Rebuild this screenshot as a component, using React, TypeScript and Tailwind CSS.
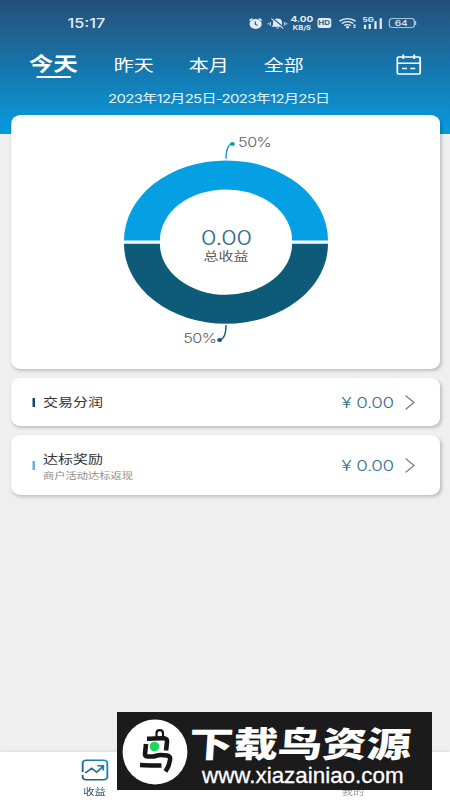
import type { ReactNode } from "react";
import clsx from "clsx";

const RANGES = [
  { label: "今天", width: "w-[68px]" },
  { label: "昨天", width: "w-[60px]" },
  { label: "本月", width: "w-[60px]" },
  { label: "全部", width: "w-[60px]" },
];

const ROWS = [
  { title: "交易分润", note: "", amount: "0.00", bar: "bg-[#0b4a6c]", height: "h-[48px]" },
  { title: "达标奖励", note: "商户活动达标返现", amount: "0.00", bar: "bg-[#66b4cf]", height: "h-[60px]" },
];

function StatusBar() {
  return (
    <div className="flex h-[46px] items-center pl-[54px] pr-[27px] text-[#e3edf5]">
      <span className="flex-1 pt-px text-[13px] font-medium">15:17</span>
      <svg className="mr-[4px] h-[13px] w-[11px]" viewBox="0 0 11 13">
        <circle cx="5.5" cy="7" r="4.9" fill="currentColor" />
        <path d="M.6 3.4 2.8 1.6M10.4 3.4 8.2 1.6" stroke="currentColor" strokeWidth="1.3" />
        <path d="M5.3 4.6v2.8l1.9 1" fill="none" stroke="#265f8f" strokeWidth="1" />
      </svg>
      <svg className="mr-[3px] h-[13px] w-[16px]" viewBox="0 0 16 13">
        <path d="M8 1.5c2.4 0 3.6 1.7 3.6 3.8v2.6l1.2 1.8H3.2l1.2-1.8V5.3C4.4 3.2 5.6 1.5 8 1.5Z" fill="currentColor" />
        <path d="M6.7 10.6h2.6c-.3 1.2-2.3 1.2-2.6 0Z" fill="currentColor" />
        <path d="m3.8 1 9.6 10" stroke="#265a88" strokeWidth="1.2" />
        <path d="m3 1.5 9.6 10" stroke="currentColor" strokeWidth="1" />
        <path d="M2.2 5v3.6M.5 6v1.4M13.8 5v3.6M15.5 6v1.4" stroke="currentColor" strokeWidth=".9" />
      </svg>
      <span className="mr-[4px] flex w-[17px] flex-col items-center font-bold">
        <span className="text-[8px] leading-[8.5px]">4.00</span>
        <span className="text-[6px] leading-[7px]">KB/S</span>
      </span>
      <span className="mr-[6px] flex h-[9.6px] w-[10.5px] items-center justify-center rounded-[2px] bg-[#e3edf5] text-[6.4px] leading-[9px] font-bold text-[#265f8f]">
        HD
      </span>
      <svg className="mr-[5px] h-[12px] w-[14px]" viewBox="0 0 14 12">
        <g fill="none" stroke="currentColor" strokeWidth="1.3">
          <path d="M.5 4.3c3.6-3.6 9.4-3.6 13 0" />
          <path d="M2.5 6.5c2.5-2.4 6.5-2.4 9 0" />
          <path d="M4.4 8.6c1.4-1.4 3.8-1.4 5.2 0" />
        </g>
        <circle cx="7" cy="10.3" r="1.2" fill="currentColor" />
        <path d="M12.6 7.6v3.4" stroke="currentColor" strokeWidth="1.7" strokeDasharray="1.4 .6" />
      </svg>
      <svg className="mr-[5px] h-[13px] w-[16px]" viewBox="0 0 16 13">
        <text x="0" y="5.4" fontSize="6.6" fontWeight="700" fill="currentColor">
          5G
        </text>
        <path d="M2 7.7V12M5.8 7v5M10.4 4.2V12M14.6 1.2V12" stroke="currentColor" strokeWidth="1.8" />
      </svg>
      <span className="flex h-[10.5px] w-[21px] items-center justify-center rounded-[3px] border border-[#a9c3d8] text-[8.2px] font-medium">
        64
      </span>
      <span className="h-[4px] w-[1.5px] bg-[#a9c3d8]" />
    </div>
  );
}

function Header() {
  return (
    <header className="h-[134px] bg-linear-to-b from-[#244f7a] via-[#1574a9] via-48% to-[#029cdf] text-white">
      <StatusBar />
      <nav className="flex h-[38px] pl-[23px]">
        {RANGES.map((range, i) => (
          <div key={range.label} className={clsx("flex flex-col", range.width)}>
            <span
              className={clsx(
                i === 0
                  ? "h-[30px] text-[19.7px] leading-[36px] font-bold"
                  : "mt-[2.5px] text-[16px] leading-[32px] font-normal"
              )}
            >
              {range.label}
            </span>
            {i === 0 && <span className="ml-[5.5px] h-[2px] w-[28px] rounded-full bg-white" />}
          </div>
        ))}
        <svg className="ml-[46px] mt-[8px] h-[21px] w-[20px]" viewBox="0 0 20 21" fill="none" stroke="white" strokeWidth="1.5">
          <rect x=".8" y="3" width="18.4" height="17" rx="1.2" />
          <path d="M1 9.3h18M5.6.5v4.6M14.4.5v4.6M4.6 14.6h4M11.2 14.6h4" />
        </svg>
      </nav>
      <p className="pl-[86.4px] text-[12px] leading-[29px] tracking-[-0.56px] whitespace-nowrap text-[#e2f3fb]">
        2023年12月25日-2023年12月25日
      </p>
    </header>
  );
}

function Card({ className, children }: { className?: string; children: ReactNode }) {
  return (
    <section className={clsx("rounded-[8px] bg-white shadow-[1px_2px_3px_rgba(0,0,0,0.2)]", className)}>
      {children}
    </section>
  );
}

function Donut() {
  return (
    <svg className="h-full w-full" viewBox="0 0 343.2 254">
      <path d="M90.2 125.4a81.6 80 0 0 1 163.2 0h-28.7a52.9 51 0 0 0 -105.8 0Z" fill="#05a0e3" />
      <path d="M90.2 128.8a81.6 80 0 0 0 163.2 0h-28.7a52.9 51 0 0 1 -105.8 0Z" fill="#0d5a79" />
      <path d="M171.8 43.8c0-7 1-14 5-15" fill="none" stroke="#1594cf" strokeWidth="1.1" />
      <circle cx="176.9" cy="29" r="2" fill="#1594cf" />
      <path d="M171.8 210c0 7-1 14-5 15" fill="none" stroke="#0d5a79" strokeWidth="1.1" />
      <circle cx="166.7" cy="225" r="2" fill="#0d5a79" />
      <g fill="#5c5c5c" fontSize="13" fontWeight="300" letterSpacing="-.5">
        <text x="181.5" y="32">50%</text>
        <text x="137.6" y="228">50%</text>
      </g>
      <text x="171.8" y="129.8" fontSize="20.6" fontWeight="300" letterSpacing="-.6" textAnchor="middle" fill="#33708f">
        0.00
      </text>
      <text x="171.9" y="146" fontSize="12" textAnchor="middle" fill="#5c5c5c">
        总收益
      </text>
    </svg>
  );
}

function TabBar() {
  return (
    <footer className="flex h-[48px] bg-white pt-[7px] text-[9px] shadow-[0_-1px_3px_rgba(0,0,0,0.08)]">
      <div className="ml-[55.6px] flex w-[40px] flex-col items-center text-[#34536b]">
        <svg className="h-[22px] w-[22px] shrink-0" viewBox="0 0 22 22" fill="none" strokeWidth="1.5">
          <defs>
            <linearGradient id="tab" gradientUnits="userSpaceOnUse" x1="0" y1="22" x2="22" y2="0">
              <stop offset="0" stopColor="#1e4c74" />
              <stop offset="1" stopColor="#1690c8" />
            </linearGradient>
          </defs>
          <g stroke="url(#tab)">
            <path d="M1.1 13V4.2A3 3 0 0 1 4.1 1.2h13.8a3 3 0 0 1 3 3v13.6a3 3 0 0 1-3 3H4.1a3 3 0 0 1-3-3V16" />
            <path d="m3.3 14 5-4.8 4 4 5-5.8M12.9 6.8h4.7v4.6" />
          </g>
        </svg>
        <span className="leading-[21px]">收益</span>
      </div>
      <div className="ml-[166.8px] flex w-[40px] flex-col items-center pt-[22px] text-[#999]">
        <span className="leading-[21px]">我的</span>
      </div>
    </footer>
  );
}

function SiteBanner() {
  return (
    <div className="absolute top-[712px] left-[117px] flex h-[78px] w-[315px] overflow-hidden bg-[#1b1b1b] text-white">
      <svg className="mt-[7px] ml-[5px] h-[66px] w-[66px] shrink-0" viewBox="0 0 66 66">
        <circle cx="33" cy="33" r="32.4" fill="white" />
        <g fill="none" stroke="#161616" strokeWidth="4.6" strokeLinejoin="round">
          <path d="M34.5 19v-4.5c0-4.5 6.5-4.5 6.500 0V18" strokeWidth="2.2" />
          <path d="M25 19.8c6 0 11-.8 17-.5 2.500.2 3.300 1.500 3 4L44 31.500" />
          <path d="M24 25l-1 10c-.2 2 .8 2.500 3 2.500h4c4 0 5-1.800 9-1.500l6 .5c2.500.3 3.400 1.800 3 4.500-.6 4.500-2 8-4.500 11.500" />
          <path d="M18 46c7 .3 13 .8 21.500.5" />
        </g>
        <circle cx="32.5" cy="27.500" r="4.800" fill="#20d65e" />
      </svg>
      <div className="ml-[-1px]">
        <p className="h-[50px] w-[180px] origin-left scale-x-[1.27] -skew-x-3 pt-[6px] pl-[2px] text-[35px] leading-[52px] font-black whitespace-nowrap">
          下载鸟资源
        </p>
        <p className="pl-[15px] font-['Liberation_Sans',sans-serif] text-[22.4px] leading-[27px] [-webkit-text-stroke:0.3px_white]">
          www.xiazainiao.com
        </p>
      </div>
    </div>
  );
}

export default function App() {
  return (
    <div className="relative h-[800px] w-[450px] overflow-hidden font-[Inter,'Noto_Sans_CJK_SC',sans-serif]">
      {/* 360pt wide screen shown at 450px, so everything in it is a quarter wider */}
      <div className="flex h-[800px] w-[360px] origin-top-left scale-x-125 flex-col bg-[#efefef]">
        <Header />
        <main className="-mt-[19px] flex flex-1 flex-col gap-[9px] pr-[8px] pl-[8.8px]">
          <Card className="h-[254px]">
            <Donut />
          </Card>
          {ROWS.map((row) => (
            <Card key={row.title} className={clsx("flex items-center pl-[17px] pr-[20px]", row.height)}>
              <span className={clsx("mr-[6.5px] h-[9px] w-[2.2px]", row.bar)} />
              <div className={clsx("flex-1", row.note && "pt-[3px]")}>
                <p className="text-[12px] leading-[17px] text-[#333]">{row.title}</p>
                {row.note && <p className="text-[9px] leading-[15px] text-[#8d8d8d]">{row.note}</p>}
              </div>
              <span className="mr-[9px] pt-[2px] text-[15px] font-light tracking-[-0.3px] text-[#33708f]">
                ¥ {row.amount}
              </span>
              <svg className="h-[15px] w-[8px]" viewBox="0 0 8 15" fill="none" stroke="#777" strokeWidth="1.1">
                <path d="m.5.6 6.8 6.9-6.8 6.9" />
              </svg>
            </Card>
          ))}
        </main>
        <TabBar />
      </div>
      <SiteBanner />
    </div>
  );
}
